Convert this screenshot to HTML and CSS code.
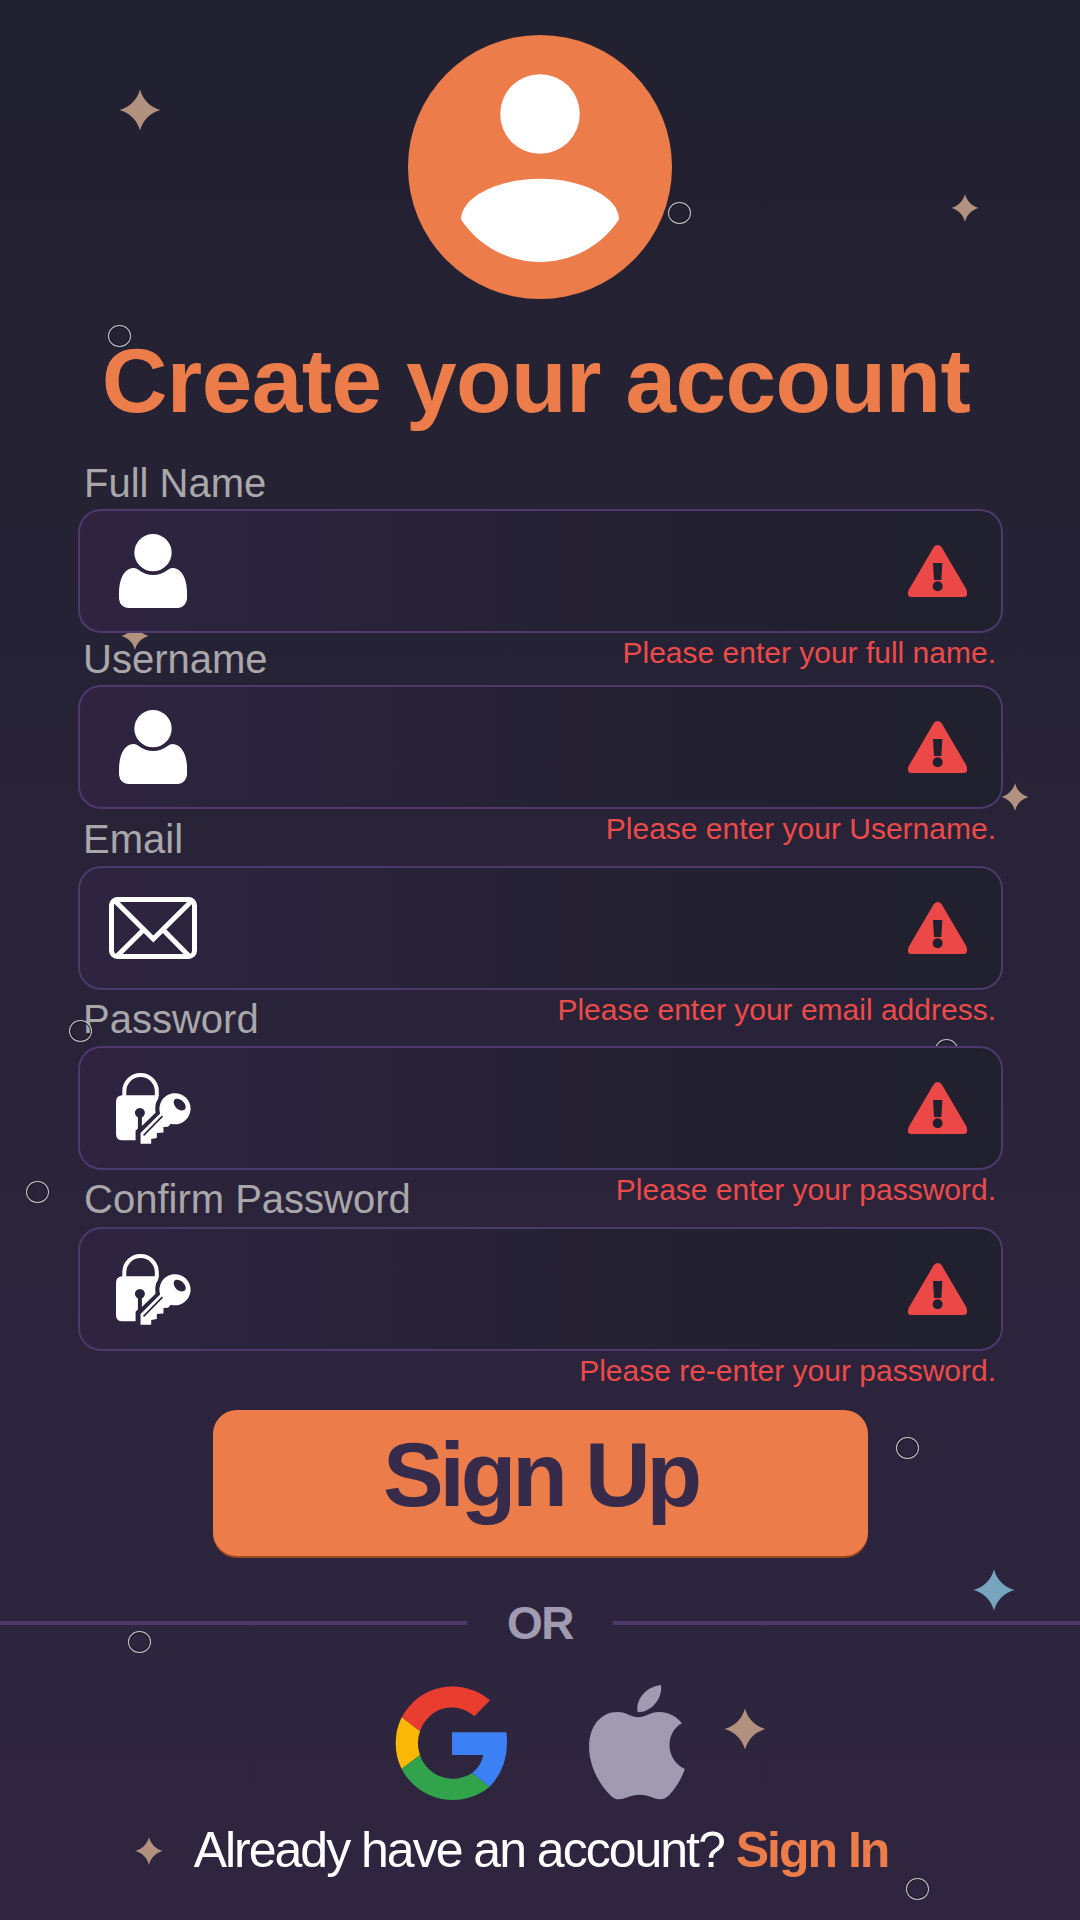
FILE: index.html
```html
<!DOCTYPE html>
<html lang="en">
<head>
<meta charset="utf-8">
<title>Create your account</title>
<link rel="stylesheet" href="styles.css">
</head>
<body>
<svg class="sprite" aria-hidden="true">
  <symbol id="star" viewBox="0 0 42 42"><path d="M21 0.500C24 11 31 18 41.500 21C31 24 24 31 21 41.500C18 31 11 24 0.500 21C11 18 18 11 21 0.500Z"/></symbol>
  <symbol id="user" viewBox="177 642 204 222"><circle cx="279" cy="698" r="56"/><path d="M177 822C177 772 195 744 222 744Q229 744 235 749C262 770 297 770 324 749Q330 744 337 744C363 744 381 775 381 815V836Q378 860 355 864H205Q180 862 177 836Z"/></symbol>
  <symbol id="mail" viewBox="147 771 264 186"><g fill="none" stroke="currentColor" stroke-width="15"><rect x="154.500" y="778.500" width="249" height="171" rx="18"/><path d="M163 781L280 897L397 781M250 870L172 947M310 870L386 947"/></g></symbol>
  <symbol id="lock" viewBox="48 38 226 214"><path d="M73 107V93A48 48 0 0 1 171 93V107" fill="none" stroke="currentColor" stroke-width="12"/><path d="M68 105H176Q178 112 174 118Q164 130 167 158L126 198V172A15 15 0 1 0 114 172V205L107 212V241H68Q48 241 48 221V125Q48 105 68 105Z"/><path fill-rule="evenodd" d="M181 160A47 47 0 1 1 213 191L205 200L191 201V217L171 219V234L154 237V251H122V219ZM226 117C217 124 224 142 236 148C247 154 257 150 258 142C260 129 240 111 226 117Z"/><path class="groove" d="M188 168L131 226"/></symbol>
  <symbol id="warn" viewBox="1104 675 177 156"><path fill-rule="evenodd" d="M1181 682Q1193 668 1205 682L1279 808Q1286 831 1272 831H1113Q1099 831 1106 810ZM1179 729L1182 780H1204L1207 729ZM1193 784A15 15 0 1 0 1193 814A15 15 0 1 0 1193 784Z"/></symbol>
</svg>

<main class="page">
  <div class="sky" aria-hidden="true">
    <svg class="star large s1"><use href="#star"/></svg>
    <svg class="star s2"><use href="#star"/></svg>
    <svg class="star s3"><use href="#star"/></svg>
    <svg class="star s4"><use href="#star"/></svg>
    <svg class="star large blue s5"><use href="#star"/></svg>
    <svg class="star large s6"><use href="#star"/></svg>
    <svg class="star s7"><use href="#star"/></svg>
    <i class="ring r1"></i><i class="ring r2"></i><i class="ring r3"></i><i class="ring r4"></i><i class="ring r5"></i><i class="ring r6"></i><i class="ring r7"></i><i class="ring r8"></i>
  </div>

  <svg class="avatar" viewBox="408 35 264 264" aria-hidden="true">
    <circle cx="540" cy="167" r="132" fill="#ec7d4a"/>
    <circle cx="540" cy="114" r="39.800" fill="#fff"/>
    <path fill="#fff" d="M461 219.500C461 197 498 178.800 540 178.800S619 197 619 219.500A94.700 94.700 0 0 1 461 219.500Z"/>
  </svg>
  <h1 class="title">Create your account</h1>

  <form class="form">
    <div class="field">
      <label class="label">Full Name</label>
      <div class="box"><span class="slot"><svg class="user"><use href="#user"/></svg></span><svg class="warn"><use href="#warn"/></svg></div>
      <p class="error">Please enter your full name.</p>
    </div>
    <div class="field">
      <label class="label">Username</label>
      <div class="box"><span class="slot"><svg class="user"><use href="#user"/></svg></span><svg class="warn"><use href="#warn"/></svg></div>
      <p class="error">Please enter your Username.</p>
    </div>
    <div class="field">
      <label class="label">Email</label>
      <div class="box"><span class="slot"><svg class="mail"><use href="#mail"/></svg></span><svg class="warn"><use href="#warn"/></svg></div>
      <p class="error">Please enter your email address.</p>
    </div>
    <div class="field">
      <label class="label">Password</label>
      <div class="box"><span class="slot"><svg class="lock"><use href="#lock"/></svg></span><svg class="warn"><use href="#warn"/></svg></div>
      <p class="error">Please enter your password.</p>
    </div>
    <div class="field">
      <label class="label">Confirm Password</label>
      <div class="box"><span class="slot"><svg class="lock"><use href="#lock"/></svg></span><svg class="warn"><use href="#warn"/></svg></div>
      <p class="error">Please re-enter your password.</p>
    </div>
    <button class="submit" type="button">Sign Up</button>
  </form>

  <div class="divider"><span class="or">OR</span></div>

  <div class="social">
    <svg class="google" viewBox="45 75 336 348" aria-label="Google">
      <path fill="#e93d2f" d="M65 172A173 174 0 0 1 330 121L283 169A101 105 0 0 0 120 214Z"/>
      <path fill="#fbb807" d="M65 172L120 214A105 105 0 0 0 120 285L65 327A172 174 0 0 1 65 172Z"/>
      <path fill="#30a34b" d="M65 327L120 285A104 104 0 0 0 276 339L329 380A173 174 0 0 1 65 327Z"/>
      <path fill="#3c80f6" d="M216 217H379Q391 316 329 380L276 339Q304 318 310 285H216Z"/>
    </svg>
    <svg class="apple" viewBox="627 75 288 346" aria-label="Apple">
      <path d="M843 75C849 115 815 157 773 157C765 118 800 79 843 75Z"/>
      <path d="M774 172C795 172 810 156 838 156C868 156 893 172 906 190C855 218 855 300 915 328C905 358 885 388 868 406C850 424 838 420 820 414C790 401 765 403 742 413C720 422 705 421 692 408C655 372 627 315 627 262C627 195 665 156 712 156C740 156 755 172 774 172Z"/>
    </svg>
  </div>

  <p class="signin">Already have an account? <a class="link">Sign In</a></p>
</main>
</body>
</html>
```
FILE: styles.css
```css
* { box-sizing: border-box; }
body { margin: 0; font-family: "Liberation Sans", Arial, sans-serif; }
.sprite { display: none; }
.page {
  position: relative;
  width: 1080px;
  height: 1920px;
  overflow: hidden;
  padding-top: 35px;
  display: flex;
  flex-direction: column;
  align-items: center;
  background: linear-gradient(#222130, #2f2540);
}

/* Night-sky decoration scattered behind the form */
.sky { position: absolute; inset: 0; }
.star { position: absolute; width: 28px; height: 28px; fill: #b3917f; }
.star.large { width: 42px; height: 42px; }
.star.blue { fill: #78a5be; }
.s1 { left: 119px; top: 89px; }
.s2 { left: 951px; top: 194px; }
.s3 { left: 121px; top: 622px; }
.s4 { left: 1001px; top: 783px; }
.s5 { left: 973px; top: 1569px; }
.s6 { left: 724px; top: 1708px; }
.s7 { left: 135px; top: 1837px; }
.ring {
  position: absolute;
  width: 23px;
  height: 22px;
  border: 1px solid #c5c3c8;
  border-radius: 50%;
  box-shadow: inset 0 0 0 1px #14121c;
}
.r1 { left: 668px; top: 202px; }
.r2 { left: 108px; top: 325px; }
.r3 { left: 69px; top: 1020px; }
.r4 { left: 935px; top: 1039px; }
.r5 { left: 26px; top: 1181px; }
.r6 { left: 896px; top: 1437px; }
.r7 { left: 128px; top: 1631px; }
.r8 { left: 906px; top: 1878px; }

.avatar { width: 264px; height: 264px; flex: none; }
.title {
  margin: 32px 8px 0 0;
  font-size: 91px;
  line-height: 100px;
  letter-spacing: -0.6px;
  color: #ec7d4a;
  white-space: nowrap;
}

.form { width: 925px; margin: 29px 0 0 1px; }
.field + .field { margin-top: 3px; }
.field:nth-child(n+3) { margin-top: 6px; }
.field:nth-child(3) { margin-top: 7px; }
.label {
  display: block;
  padding-left: 5px;
  margin-bottom: 3px;
  font-size: 40px;
  line-height: 46px;
  color: #aaa7ab;
}
.field:first-child .label, .field:nth-child(5) .label { padding-left: 6px; }
.field:nth-child(n+3) .label { margin-bottom: 4px; }
.field:nth-child(5) .label { margin-bottom: 5px; }
.box {
  position: relative;
  height: 124px;
  padding: 0 34px 0 29px;
  display: flex;
  align-items: center;
  justify-content: space-between;
  border: 2px solid #4b3a6b;
  border-radius: 23px;
  background: linear-gradient(90deg, #2e2440, #242132 60%, #21202e);
  color: #fff;
}
.slot { width: 88px; display: flex; justify-content: center; }
.user { width: 68px; height: 74px; fill: #fff; }
.mail { width: 88px; height: 62px; margin-bottom: 0; }
.lock { width: 75px; height: 71px; fill: #fff; margin-top: 1px; }
.groove { fill: none; stroke: #2d2440; stroke-width: 5; }
.warn { width: 59px; height: 52px; fill: #ed4848; }
.error {
  margin: 0 0 -40px;
  padding-right: 7px;
  font-size: 30px;
  line-height: 40px;
  text-align: right;
  color: #ed4a4a;
}
.submit {
  display: block;
  width: 655px;
  height: 146px;
  margin: 59px auto 0;
  padding: 0 0 16px;
  border: 0;
  border-radius: 24px;
  box-shadow: 0 2px 0 #9b481f;
  background: #ec7d4a;
  color: #372b4b;
  font: bold 91px "Liberation Sans", Arial, sans-serif;
  letter-spacing: -4.1px;
}

.divider {
  width: 100%;
  margin-top: 42px;
  display: flex;
  align-items: center;
  justify-content: space-between;
}
.divider::before, .divider::after { content: ""; width: 467px; height: 4px; background: #4b3a6b; }
.or { font-size: 46px; font-weight: bold; line-height: 50px; letter-spacing: -1.6px; color: #a19bb1; }

.social { display: flex; gap: 82px; margin-top: 37px; }
.google { width: 112px; height: 116px; }
.apple { width: 96px; height: 115px; fill: #a19bb1; }
.signin {
  margin: 20px 0 0 2px;
  font-size: 50px;
  line-height: 58px;
  letter-spacing: -2px;
  white-space: nowrap;
  color: #fff;
}
.link { color: #ec7d4a; font-weight: bold; }
```
